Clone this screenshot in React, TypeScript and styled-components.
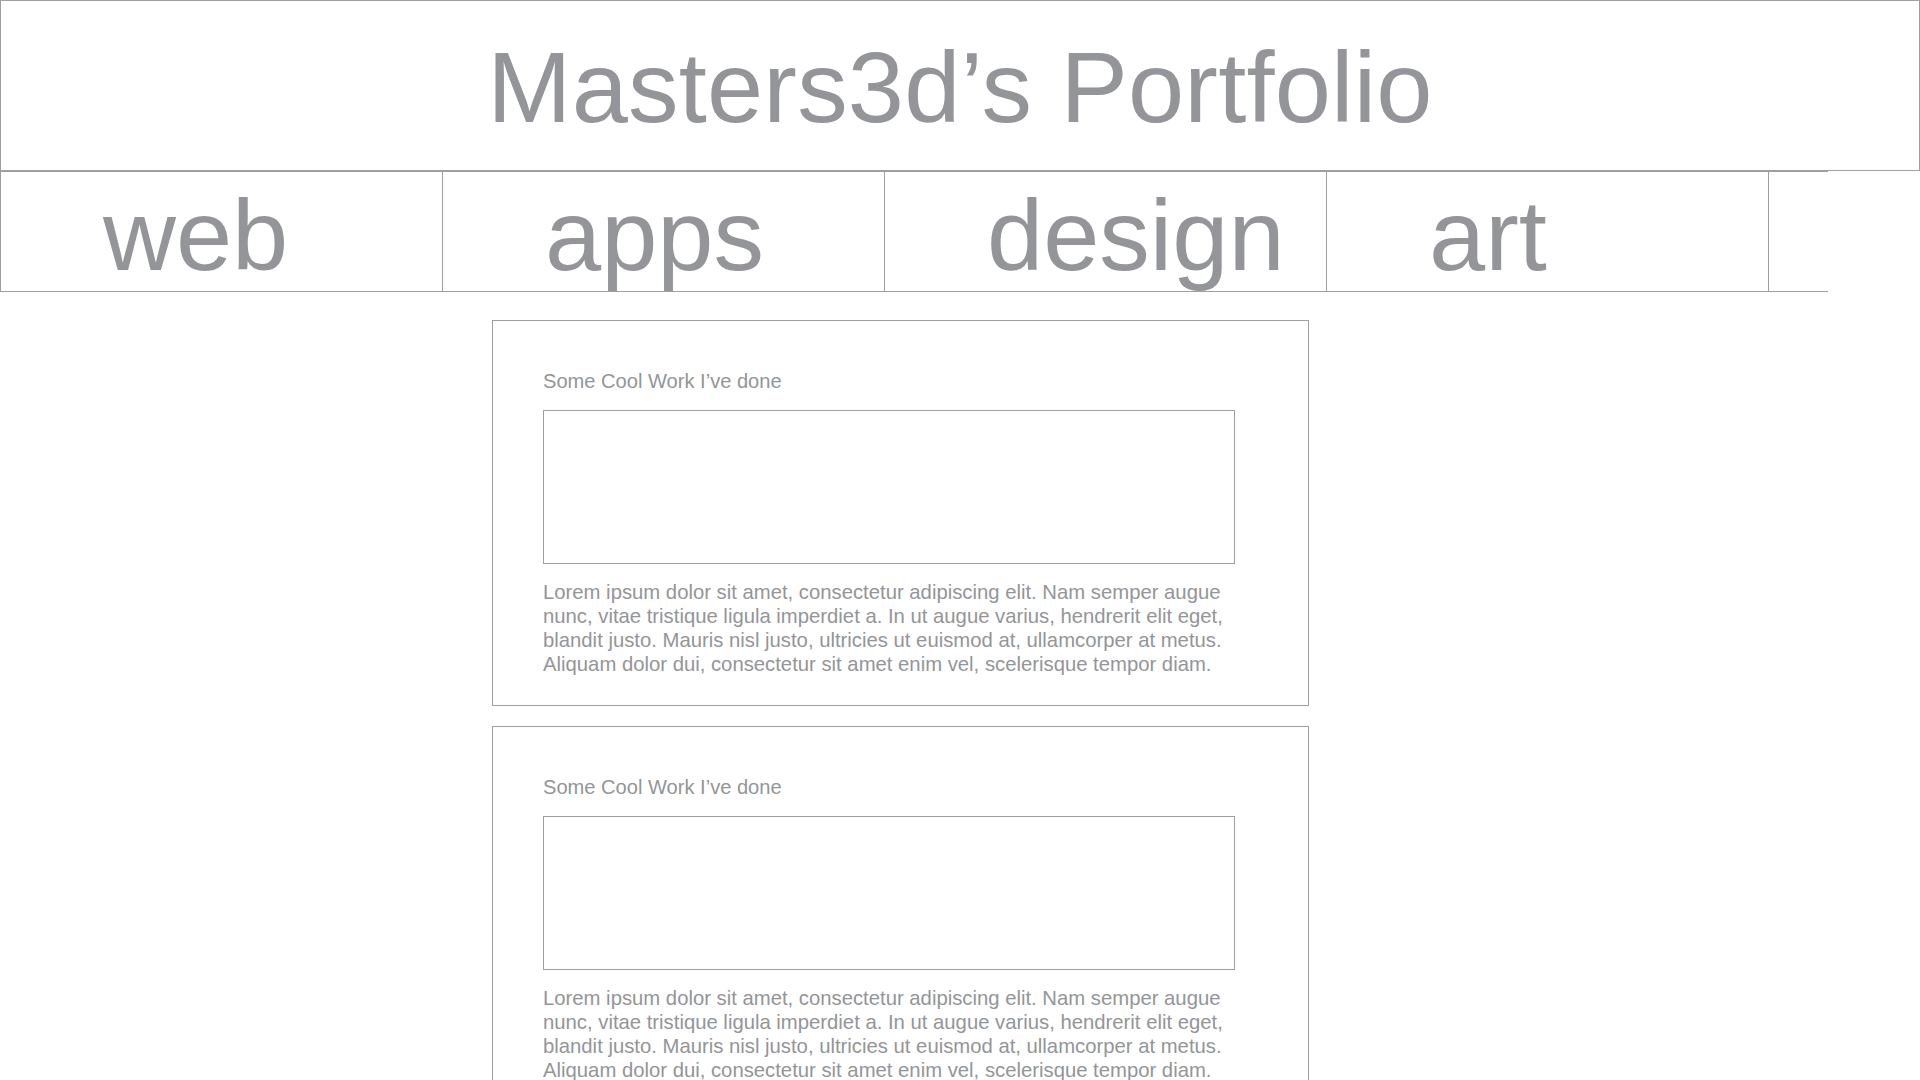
import React from "react";
import styled, { createGlobalStyle } from "styled-components";

const GlobalStyle = createGlobalStyle`
  html, body {
    margin: 0;
    padding: 0;
    background: #ffffff;
  }
  body {
    font-family: "Liberation Sans", Helvetica, Arial, sans-serif;
    color: #939598;
  }
  * { box-sizing: border-box; }
`;

const LINE = "#9d9fa2";

const Page = styled.div`
  width: 1920px;
  min-height: 1080px;
  overflow: hidden;
`;

const Header = styled.header`
  width: 1920px;
  height: 171px;
  border: 1px solid ${LINE};
  display: flex;
  justify-content: center;
  padding-top: 36px;
`;

const Title = styled.h1`
  margin: 0;
  font-size: 101px;
  line-height: 101px;
  font-weight: 400;
  color: #939598;
  letter-spacing: 0.2px;
`;

const Nav = styled.nav`
  width: 1828px;
  height: 121px;
  display: flex;
  border-top: 1px solid ${LINE};
  border-bottom: 1px solid ${LINE};
`;

const NavItem = styled.a`
  width: 442px;
  height: 100%;
  border-left: 1px solid ${LINE};
  padding: 13px 0 0 102px;
  font-size: 101px;
  line-height: 101px;
  color: #939598;
  text-decoration: none;
`;

const NavFiller = styled.div`
  flex: 1;
  border-left: 1px solid ${LINE};
`;

const Content = styled.main`
  display: flex;
  flex-direction: column;
  gap: 20px;
  padding: 28px 0 40px 492px;
`;

const Card = styled.article`
  width: 817px;
  border: 1px solid ${LINE};
  padding: 48px 74px 29px 50px;
  display: flex;
  flex-direction: column;
`;

const CardTitle = styled.h2`
  margin: 0 0 17px;
  font-size: 20.1px;
  line-height: 24px;
  font-weight: 400;
  color: #939598;
`;

const ImageFrame = styled.div`
  width: 692px;
  height: 154px;
  border: 1px solid ${LINE};
  margin-bottom: 16px;
`;

const Body = styled.p`
  margin: 0;
  font-size: 20.3px;
  line-height: 24px;
  color: #939598;
  white-space: nowrap;
`;

const navItems = ["web", "apps", "design", "art"];

const bodyLines = [
  "Lorem ipsum dolor sit amet, consectetur adipiscing elit. Nam semper augue",
  "nunc, vitae tristique ligula imperdiet a. In ut augue varius, hendrerit elit eget,",
  "blandit justo. Mauris nisl justo, ultricies ut euismod at, ullamcorper at metus.",
  "Aliquam dolor dui, consectetur sit amet enim vel, scelerisque tempor diam.",
];

const WorkCard: React.FC = () => (
  <Card>
    <CardTitle>Some Cool Work I’ve done</CardTitle>
    <ImageFrame />
    <Body>
      {bodyLines.map((l, i) => (
        <React.Fragment key={i}>
          {l}
          {i < bodyLines.length - 1 && <br />}
        </React.Fragment>
      ))}
    </Body>
  </Card>
);

export default function App() {
  return (
    <Page>
      <GlobalStyle />
      <Header>
        <Title>Masters3d’s Portfolio</Title>
      </Header>
      <Nav>
        {navItems.map((n) => (
          <NavItem key={n} href="#">
            {n}
          </NavItem>
        ))}
        <NavFiller />
      </Nav>
      <Content>
        <WorkCard />
        <WorkCard />
      </Content>
    </Page>
  );
}
